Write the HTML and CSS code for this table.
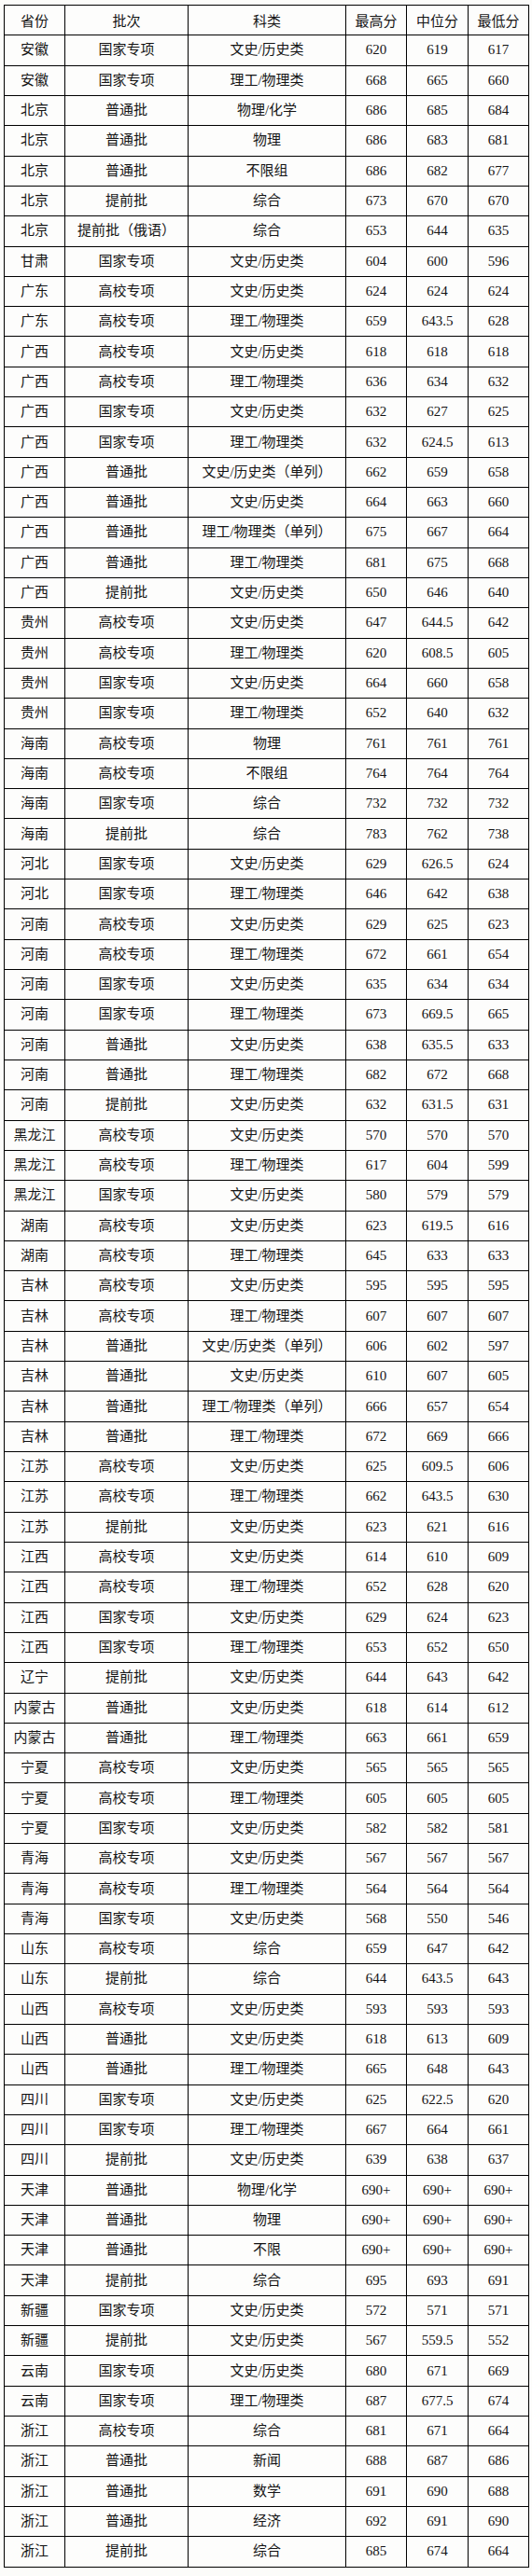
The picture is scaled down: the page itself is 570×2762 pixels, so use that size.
FILE: index.html
```html
<!DOCTYPE html>
<html lang="zh-CN">
<head>
<meta charset="utf-8">
<title>录取分数</title>
<link rel="stylesheet" href="styles.css">
</head>
<body>
<table class="scores">
<colgroup>
<col class="c-prov"><col class="c-batch"><col class="c-type"><col class="c-num"><col class="c-num2"><col class="c-num">
</colgroup>
<thead>
<tr><th>省份</th><th>批次</th><th>科类</th><th>最高分</th><th>中位分</th><th>最低分</th></tr>
</thead>
<tbody>
<tr><td>安徽</td><td>国家专项</td><td>文史/历史类</td><td>620</td><td>619</td><td>617</td></tr>
<tr><td>安徽</td><td>国家专项</td><td>理工/物理类</td><td>668</td><td>665</td><td>660</td></tr>
<tr><td>北京</td><td>普通批</td><td>物理/化学</td><td>686</td><td>685</td><td>684</td></tr>
<tr><td>北京</td><td>普通批</td><td>物理</td><td>686</td><td>683</td><td>681</td></tr>
<tr><td>北京</td><td>普通批</td><td>不限组</td><td>686</td><td>682</td><td>677</td></tr>
<tr><td>北京</td><td>提前批</td><td>综合</td><td>673</td><td>670</td><td>670</td></tr>
<tr><td>北京</td><td>提前批（俄语）</td><td>综合</td><td>653</td><td>644</td><td>635</td></tr>
<tr><td>甘肃</td><td>国家专项</td><td>文史/历史类</td><td>604</td><td>600</td><td>596</td></tr>
<tr><td>广东</td><td>高校专项</td><td>文史/历史类</td><td>624</td><td>624</td><td>624</td></tr>
<tr><td>广东</td><td>高校专项</td><td>理工/物理类</td><td>659</td><td>643.5</td><td>628</td></tr>
<tr><td>广西</td><td>高校专项</td><td>文史/历史类</td><td>618</td><td>618</td><td>618</td></tr>
<tr><td>广西</td><td>高校专项</td><td>理工/物理类</td><td>636</td><td>634</td><td>632</td></tr>
<tr><td>广西</td><td>国家专项</td><td>文史/历史类</td><td>632</td><td>627</td><td>625</td></tr>
<tr><td>广西</td><td>国家专项</td><td>理工/物理类</td><td>632</td><td>624.5</td><td>613</td></tr>
<tr><td>广西</td><td>普通批</td><td>文史/历史类（单列）</td><td>662</td><td>659</td><td>658</td></tr>
<tr><td>广西</td><td>普通批</td><td>文史/历史类</td><td>664</td><td>663</td><td>660</td></tr>
<tr><td>广西</td><td>普通批</td><td>理工/物理类（单列）</td><td>675</td><td>667</td><td>664</td></tr>
<tr><td>广西</td><td>普通批</td><td>理工/物理类</td><td>681</td><td>675</td><td>668</td></tr>
<tr><td>广西</td><td>提前批</td><td>文史/历史类</td><td>650</td><td>646</td><td>640</td></tr>
<tr><td>贵州</td><td>高校专项</td><td>文史/历史类</td><td>647</td><td>644.5</td><td>642</td></tr>
<tr><td>贵州</td><td>高校专项</td><td>理工/物理类</td><td>620</td><td>608.5</td><td>605</td></tr>
<tr><td>贵州</td><td>国家专项</td><td>文史/历史类</td><td>664</td><td>660</td><td>658</td></tr>
<tr><td>贵州</td><td>国家专项</td><td>理工/物理类</td><td>652</td><td>640</td><td>632</td></tr>
<tr><td>海南</td><td>高校专项</td><td>物理</td><td>761</td><td>761</td><td>761</td></tr>
<tr><td>海南</td><td>高校专项</td><td>不限组</td><td>764</td><td>764</td><td>764</td></tr>
<tr><td>海南</td><td>国家专项</td><td>综合</td><td>732</td><td>732</td><td>732</td></tr>
<tr><td>海南</td><td>提前批</td><td>综合</td><td>783</td><td>762</td><td>738</td></tr>
<tr><td>河北</td><td>国家专项</td><td>文史/历史类</td><td>629</td><td>626.5</td><td>624</td></tr>
<tr><td>河北</td><td>国家专项</td><td>理工/物理类</td><td>646</td><td>642</td><td>638</td></tr>
<tr><td>河南</td><td>高校专项</td><td>文史/历史类</td><td>629</td><td>625</td><td>623</td></tr>
<tr><td>河南</td><td>高校专项</td><td>理工/物理类</td><td>672</td><td>661</td><td>654</td></tr>
<tr><td>河南</td><td>国家专项</td><td>文史/历史类</td><td>635</td><td>634</td><td>634</td></tr>
<tr><td>河南</td><td>国家专项</td><td>理工/物理类</td><td>673</td><td>669.5</td><td>665</td></tr>
<tr><td>河南</td><td>普通批</td><td>文史/历史类</td><td>638</td><td>635.5</td><td>633</td></tr>
<tr><td>河南</td><td>普通批</td><td>理工/物理类</td><td>682</td><td>672</td><td>668</td></tr>
<tr><td>河南</td><td>提前批</td><td>文史/历史类</td><td>632</td><td>631.5</td><td>631</td></tr>
<tr><td>黑龙江</td><td>高校专项</td><td>文史/历史类</td><td>570</td><td>570</td><td>570</td></tr>
<tr><td>黑龙江</td><td>高校专项</td><td>理工/物理类</td><td>617</td><td>604</td><td>599</td></tr>
<tr><td>黑龙江</td><td>国家专项</td><td>文史/历史类</td><td>580</td><td>579</td><td>579</td></tr>
<tr><td>湖南</td><td>高校专项</td><td>文史/历史类</td><td>623</td><td>619.5</td><td>616</td></tr>
<tr><td>湖南</td><td>高校专项</td><td>理工/物理类</td><td>645</td><td>633</td><td>633</td></tr>
<tr><td>吉林</td><td>高校专项</td><td>文史/历史类</td><td>595</td><td>595</td><td>595</td></tr>
<tr><td>吉林</td><td>高校专项</td><td>理工/物理类</td><td>607</td><td>607</td><td>607</td></tr>
<tr><td>吉林</td><td>普通批</td><td>文史/历史类（单列）</td><td>606</td><td>602</td><td>597</td></tr>
<tr><td>吉林</td><td>普通批</td><td>文史/历史类</td><td>610</td><td>607</td><td>605</td></tr>
<tr><td>吉林</td><td>普通批</td><td>理工/物理类（单列）</td><td>666</td><td>657</td><td>654</td></tr>
<tr><td>吉林</td><td>普通批</td><td>理工/物理类</td><td>672</td><td>669</td><td>666</td></tr>
<tr><td>江苏</td><td>高校专项</td><td>文史/历史类</td><td>625</td><td>609.5</td><td>606</td></tr>
<tr><td>江苏</td><td>高校专项</td><td>理工/物理类</td><td>662</td><td>643.5</td><td>630</td></tr>
<tr><td>江苏</td><td>提前批</td><td>文史/历史类</td><td>623</td><td>621</td><td>616</td></tr>
<tr><td>江西</td><td>高校专项</td><td>文史/历史类</td><td>614</td><td>610</td><td>609</td></tr>
<tr><td>江西</td><td>高校专项</td><td>理工/物理类</td><td>652</td><td>628</td><td>620</td></tr>
<tr><td>江西</td><td>国家专项</td><td>文史/历史类</td><td>629</td><td>624</td><td>623</td></tr>
<tr><td>江西</td><td>国家专项</td><td>理工/物理类</td><td>653</td><td>652</td><td>650</td></tr>
<tr><td>辽宁</td><td>提前批</td><td>文史/历史类</td><td>644</td><td>643</td><td>642</td></tr>
<tr><td>内蒙古</td><td>普通批</td><td>文史/历史类</td><td>618</td><td>614</td><td>612</td></tr>
<tr><td>内蒙古</td><td>普通批</td><td>理工/物理类</td><td>663</td><td>661</td><td>659</td></tr>
<tr><td>宁夏</td><td>高校专项</td><td>文史/历史类</td><td>565</td><td>565</td><td>565</td></tr>
<tr><td>宁夏</td><td>高校专项</td><td>理工/物理类</td><td>605</td><td>605</td><td>605</td></tr>
<tr><td>宁夏</td><td>国家专项</td><td>文史/历史类</td><td>582</td><td>582</td><td>581</td></tr>
<tr><td>青海</td><td>高校专项</td><td>文史/历史类</td><td>567</td><td>567</td><td>567</td></tr>
<tr><td>青海</td><td>高校专项</td><td>理工/物理类</td><td>564</td><td>564</td><td>564</td></tr>
<tr><td>青海</td><td>国家专项</td><td>文史/历史类</td><td>568</td><td>550</td><td>546</td></tr>
<tr><td>山东</td><td>高校专项</td><td>综合</td><td>659</td><td>647</td><td>642</td></tr>
<tr><td>山东</td><td>提前批</td><td>综合</td><td>644</td><td>643.5</td><td>643</td></tr>
<tr><td>山西</td><td>高校专项</td><td>文史/历史类</td><td>593</td><td>593</td><td>593</td></tr>
<tr><td>山西</td><td>普通批</td><td>文史/历史类</td><td>618</td><td>613</td><td>609</td></tr>
<tr><td>山西</td><td>普通批</td><td>理工/物理类</td><td>665</td><td>648</td><td>643</td></tr>
<tr><td>四川</td><td>国家专项</td><td>文史/历史类</td><td>625</td><td>622.5</td><td>620</td></tr>
<tr><td>四川</td><td>国家专项</td><td>理工/物理类</td><td>667</td><td>664</td><td>661</td></tr>
<tr><td>四川</td><td>提前批</td><td>文史/历史类</td><td>639</td><td>638</td><td>637</td></tr>
<tr><td>天津</td><td>普通批</td><td>物理/化学</td><td>690+</td><td>690+</td><td>690+</td></tr>
<tr><td>天津</td><td>普通批</td><td>物理</td><td>690+</td><td>690+</td><td>690+</td></tr>
<tr><td>天津</td><td>普通批</td><td>不限</td><td>690+</td><td>690+</td><td>690+</td></tr>
<tr><td>天津</td><td>提前批</td><td>综合</td><td>695</td><td>693</td><td>691</td></tr>
<tr><td>新疆</td><td>国家专项</td><td>文史/历史类</td><td>572</td><td>571</td><td>571</td></tr>
<tr><td>新疆</td><td>提前批</td><td>文史/历史类</td><td>567</td><td>559.5</td><td>552</td></tr>
<tr><td>云南</td><td>国家专项</td><td>文史/历史类</td><td>680</td><td>671</td><td>669</td></tr>
<tr><td>云南</td><td>国家专项</td><td>理工/物理类</td><td>687</td><td>677.5</td><td>674</td></tr>
<tr><td>浙江</td><td>高校专项</td><td>综合</td><td>681</td><td>671</td><td>664</td></tr>
<tr><td>浙江</td><td>普通批</td><td>新闻</td><td>688</td><td>687</td><td>686</td></tr>
<tr><td>浙江</td><td>普通批</td><td>数学</td><td>691</td><td>690</td><td>688</td></tr>
<tr><td>浙江</td><td>普通批</td><td>经济</td><td>692</td><td>691</td><td>690</td></tr>
<tr><td>浙江</td><td>提前批</td><td>综合</td><td>685</td><td>674</td><td>664</td></tr>
</tbody>
</table>
</body>
</html>
```
FILE: styles.css
```css
html, body {
  margin: 0;
  padding: 0;
  background: #fcfcfa;
}

body {
  padding: 5px 0 0 4px;
}

.scores {
  border-collapse: collapse;
  table-layout: fixed;
  width: 562px;
  font-family: "Liberation Serif", "Noto Sans CJK SC", serif;
  font-size: 15px;
  color: #141414;
  background: #fdfdfc;
}

.c-prov { width: 65px; }
.c-batch { width: 132px; }
.c-type { width: 169px; }
.c-num { width: 65px; }
.c-num2 { width: 66px; }

.scores th,
.scores td {
  border: 1px solid #000;
  height: 31.32px;
  padding: 0;
  text-align: center;
  vertical-align: middle;
  font-weight: normal;
  white-space: nowrap;
  line-height: 1;
}

.scores th {
  font-family: "Noto Sans CJK SC", sans-serif;
}
```
